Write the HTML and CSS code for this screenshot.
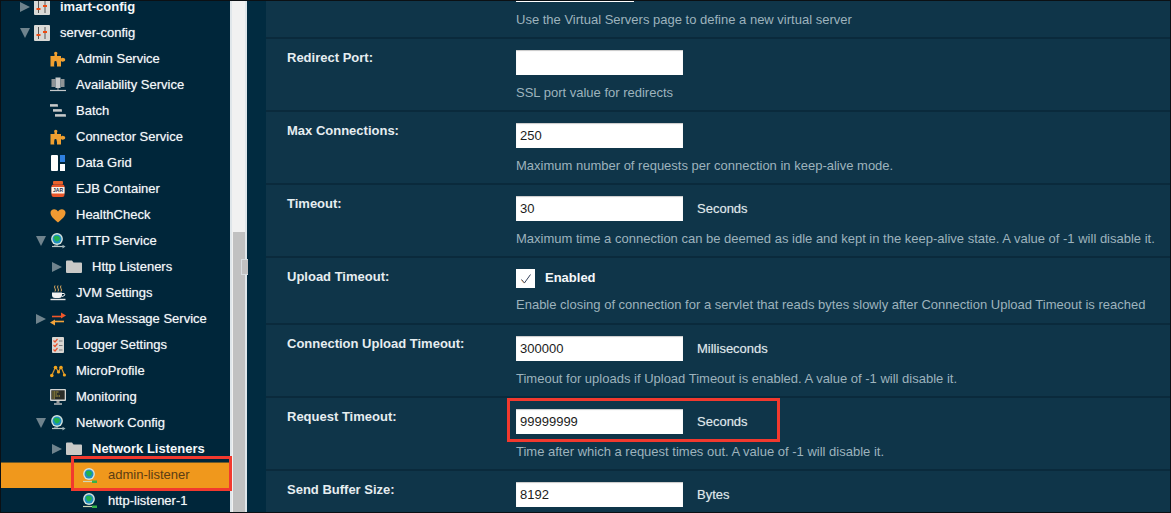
FILE: index.html
```html
<!DOCTYPE html>
<html lang="en">
<head>
<meta charset="utf-8">
<title>server-config</title>
<link rel="stylesheet" href="styles.css">
</head>
<body>
<svg class="defs" width="0" height="0" aria-hidden="true">
  <defs>
    <symbol id="tri-r" viewBox="0 0 10 10"><path d="M0 0L10 5L0 10Z" fill="#6f838d"/></symbol>
    <symbol id="tri-d" viewBox="0 0 10 10"><path d="M0 0H10L5 10Z" fill="#6f838d"/></symbol>
    <symbol id="config" viewBox="0 0 16 16">
      <rect width="16" height="16" rx="1" fill="#d9d9d6"/>
      <path d="M4.5 2V14M11 2V14" stroke="#555" stroke-width="1"/>
      <path d="M2.5 9H6.5V11H2.5ZM9 6H13V8H9Z" fill="#ee4b12"/>
    </symbol>
    <symbol id="puzzle" viewBox="0 0 16 16">
      <path d="M0.5 5H4.5V3.5A2 2 0 0 1 4.3 1.5A1.7 1.7 0 0 1 7.2 1.5A2 2 0 0 1 7 3.5V5H11V7.5A2 2 0 0 1 13.5 7A1.6 1.6 0 0 1 13.5 10.5A2 2 0 0 1 11 10V15.5H7V12.5H4.5V15.5H0.5Z" fill="#f0a030"/>
      <path d="M4.3 15.5V11.2A1 1 0 0 1 6.7 11.2V15.5Z" fill="#00263a"/>
    </symbol>
    <symbol id="server" viewBox="0 0 16 16">
      <rect x="1.5" y="2" width="4" height="8" fill="#8f9496"/>
      <rect x="5.5" y="0.5" width="5" height="10.5" fill="#c8cbcc"/>
      <rect x="10.5" y="2" width="4" height="8" fill="#8f9496"/>
      <path d="M8 11V13" stroke="#aaa"/>
      <path d="M0 13.5H16" stroke="#c4c8ca" stroke-width="1.2"/>
    </symbol>
    <symbol id="batch" viewBox="0 0 16 16">
      <path d="M0 2.5H8M3 7.5H12M5 12.5H16" stroke="#b3b7b8" stroke-width="2.6"/>
      <path d="M0 2H7M3 7H11M5 12H15" stroke="#e6e6e6" stroke-width="0.8"/>
    </symbol>
    <symbol id="grid" viewBox="0 0 16 16">
      <rect x="1" y="0" width="7" height="16" rx="1" fill="#fff"/>
      <rect x="10" y="0" width="5" height="7" fill="#2f80e0"/>
      <rect x="10" y="9" width="5" height="7" fill="#fff"/>
    </symbol>
    <symbol id="jar" viewBox="0 0 16 16">
      <rect x="3" y="0" width="10" height="3.4" rx="1" fill="#e8632c"/>
      <rect x="1.5" y="3.4" width="13" height="12.6" rx="2.2" fill="#e8562a"/>
      <rect x="1.5" y="6" width="13" height="6.5" fill="#fbf4ea"/>
      <text x="8" y="11.4" class="jar-label">JAR</text>
    </symbol>
    <symbol id="heart" viewBox="0 0 16 16">
      <path d="M8 15.5C4 12 0.5 9.5 0.5 5.5C0.5 2.2 5.5 0.6 8 4.4C10.5 0.6 15.5 2.2 15.5 5.5C15.5 9.5 12 12 8 15.5Z" fill="#f09a32"/>
    </symbol>
    <symbol id="globe" viewBox="0 0 16 16">
      <circle cx="7" cy="6" r="5.9" fill="#d7e4df"/>
      <circle cx="7" cy="6" r="4.5" fill="#1f8fc0"/>
      <path d="M4 3.5C6 2 9 2.5 10 5C9.5 8 7 9 5.5 8C5 6.5 3.5 5.5 4 3.5Z" fill="#22b14c"/>
      <path d="M2 13.5H13" stroke="#bcc8c8" stroke-width="1.2"/>
      <path d="M5 12V14M7 12V13" stroke="#bcc8c8"/>
      <path d="M12.5 11.8L15.5 13.6L12.5 15.4Z" fill="#9fb3b8"/>
    </symbol>
    <symbol id="globe-g" viewBox="0 0 16 16">
      <circle cx="7" cy="6" r="5.9" fill="#d7e4df"/>
      <circle cx="7" cy="6" r="4.5" fill="#1f8fc0"/>
      <path d="M4 3.5C6 2 9 2.5 10 5C9.5 8 7 9 5.5 8C5 6.5 3.5 5.5 4 3.5Z" fill="#22b14c"/>
      <path d="M1 13.5H10" stroke="#cfd8b8" stroke-width="1.2"/>
      <path d="M10 12.5H15V15H10Z" fill="#35b24a"/>
    </symbol>
    <symbol id="folder" viewBox="0 0 16 16">
      <path d="M0 2.5Q0 1.5 1 1.5H6L7.5 3.5H15Q16 3.5 16 4.5V13Q16 14 15 14H1Q0 14 0 13Z" fill="#c9c9c7"/>
    </symbol>
    <symbol id="cup" viewBox="0 0 16 16">
      <path d="M5 0.5Q4 2 5 3.5T5 6.5M8 0.5Q7 2 8 3.5T8 6.5M11 0.5Q10 2 11 3.5T11 6.5" stroke="#d9a860" fill="none" stroke-width="1"/>
      <path d="M2 7.5H12V10Q12 13 9 13H5Q2 13 2 10Z" fill="#f2f2f2"/>
      <path d="M12 8.5H14Q15.5 9 14.5 10.5L12 11.5" stroke="#f2f2f2" fill="none"/>
      <path d="M0.5 14.5H15.5" stroke="#e8e8e8" stroke-width="1.4"/>
    </symbol>
    <symbol id="jms" viewBox="0 0 16 16">
      <path d="M2 5.5H11" stroke="#f0572a" stroke-width="1.6" fill="none"/>
      <path d="M11 1.5L16 4.5L11 7.5Z" fill="#f0572a"/>
      <path d="M14 10.5H5" stroke="#f2a33a" stroke-width="1.6" fill="none"/>
      <path d="M5 8.5L0 11.5L5 14.5Z" fill="#f2a33a"/>
    </symbol>
    <symbol id="logger" viewBox="0 0 16 16">
      <rect x="2" y="0" width="12" height="16" rx="1" fill="#d8d6d2"/>
      <path d="M3.5 3.5L5 5L7.5 2M3.5 8L5 9.5L7.5 6.5M3.5 12.5L5 14L7.5 11" stroke="#e8502a" fill="none" stroke-width="1.2"/>
      <path d="M9 4H12.5M9 8.5H12.5M9 13H12.5" stroke="#77797a" stroke-width="1.2"/>
    </symbol>
    <symbol id="micro" viewBox="0 0 16 16">
      <path d="M1.5 13L5.5 4L8.5 9L11 4L14.5 12" stroke="#d8942c" fill="none" stroke-width="1.2"/>
      <circle cx="1.8" cy="12.5" r="1.8" fill="#f2a51e"/>
      <circle cx="5.5" cy="4.5" r="1.8" fill="#f2a51e"/>
      <circle cx="8.5" cy="9" r="1.6" fill="#f2a51e"/>
      <circle cx="11" cy="4.5" r="1.8" fill="#f2a51e"/>
      <circle cx="14.4" cy="12" r="1.6" fill="#f2a51e"/>
    </symbol>
    <symbol id="monitor" viewBox="0 0 16 16">
      <rect x="0" y="0" width="16" height="12" rx="1" fill="#d3d4d2"/>
      <rect x="1.3" y="1.3" width="13.4" height="9.2" fill="#2b2d28"/>
      <path d="M2.5 3H9M2.5 5H7M2.5 7H10M2.5 9H5" stroke="#d6c04a" stroke-dasharray="1 .6"/>
      <path d="M6.5 12H9.5V14H6.5Z" fill="#9a9c9c"/>
      <path d="M4 15H12" stroke="#c8c9c9" stroke-width="1.4"/>
    </symbol>
    <symbol id="tick" viewBox="0 0 12 12">
      <path d="M1.5 6.5L4.4 10L10.5 1.5" fill="none" stroke="#34405a" stroke-width="1"/>
      <path d="M1.2 7L4 10.4" fill="none" stroke="#e8923a" stroke-width=".5"/>
    </symbol>
  </defs>
</svg>

<div class="frame">
  <nav class="tree">
    <div class="node lvl0"><svg class="arrow"><use href="#tri-r"/></svg><svg class="ico"><use href="#config"/></svg><span class="strong">imart-config</span></div>
    <div class="node lvl0"><svg class="arrow"><use href="#tri-d"/></svg><svg class="ico"><use href="#config"/></svg><span>server-config</span></div>
    <div class="node lvl1"><i class="arrow"></i><svg class="ico"><use href="#puzzle"/></svg><span>Admin Service</span></div>
    <div class="node lvl1"><i class="arrow"></i><svg class="ico"><use href="#server"/></svg><span>Availability Service</span></div>
    <div class="node lvl1"><i class="arrow"></i><svg class="ico"><use href="#batch"/></svg><span>Batch</span></div>
    <div class="node lvl1"><i class="arrow"></i><svg class="ico"><use href="#puzzle"/></svg><span>Connector Service</span></div>
    <div class="node lvl1"><i class="arrow"></i><svg class="ico"><use href="#grid"/></svg><span>Data Grid</span></div>
    <div class="node lvl1"><i class="arrow"></i><svg class="ico"><use href="#jar"/></svg><span>EJB Container</span></div>
    <div class="node lvl1"><i class="arrow"></i><svg class="ico"><use href="#heart"/></svg><span>HealthCheck</span></div>
    <div class="node lvl1"><svg class="arrow"><use href="#tri-d"/></svg><svg class="ico"><use href="#globe"/></svg><span>HTTP Service</span></div>
    <div class="node lvl2"><svg class="arrow"><use href="#tri-r"/></svg><svg class="ico"><use href="#folder"/></svg><span>Http Listeners</span></div>
    <div class="node lvl1"><i class="arrow"></i><svg class="ico"><use href="#cup"/></svg><span>JVM Settings</span></div>
    <div class="node lvl1"><svg class="arrow"><use href="#tri-r"/></svg><svg class="ico"><use href="#jms"/></svg><span>Java Message Service</span></div>
    <div class="node lvl1"><i class="arrow"></i><svg class="ico"><use href="#logger"/></svg><span>Logger Settings</span></div>
    <div class="node lvl1"><i class="arrow"></i><svg class="ico"><use href="#micro"/></svg><span>MicroProfile</span></div>
    <div class="node lvl1"><i class="arrow"></i><svg class="ico"><use href="#monitor"/></svg><span>Monitoring</span></div>
    <div class="node lvl1"><svg class="arrow"><use href="#tri-d"/></svg><svg class="ico"><use href="#globe"/></svg><span>Network Config</span></div>
    <div class="node lvl2"><svg class="arrow"><use href="#tri-r"/></svg><svg class="ico"><use href="#folder"/></svg><span class="strong">Network Listeners</span></div>
    <div class="node lvl3 selected"><i class="arrow"></i><svg class="ico"><use href="#globe-g"/></svg><span>admin-listener</span><div class="callout tree-callout"></div></div>
    <div class="node lvl3"><i class="arrow"></i><svg class="ico"><use href="#globe-g"/></svg><span>http-listener-1</span></div>
  </nav>

  <div class="scrollbar"><div class="thumb"></div><div class="grip"></div></div>

  <main class="main">
    <div class="rows">
      <section class="row">
        <div class="label"></div>
        <div class="value">
          <div class="control"><input class="field field-short" type="text"></div>
          <p class="help">Use the Virtual Servers page to define a new virtual server</p>
        </div>
      </section>
      <section class="row">
        <div class="label">Redirect Port:</div>
        <div class="value">
          <div class="control"><input class="field" type="text"></div>
          <p class="help">SSL port value for redirects</p>
        </div>
      </section>
      <section class="row">
        <div class="label">Max Connections:</div>
        <div class="value">
          <div class="control"><input class="field" type="text" value="250"></div>
          <p class="help">Maximum number of requests per connection in keep-alive mode.</p>
        </div>
      </section>
      <section class="row">
        <div class="label">Timeout:</div>
        <div class="value">
          <div class="control"><input class="field" type="text" value="30"><span class="unit">Seconds</span></div>
          <p class="help">Maximum time a connection can be deemed as idle and kept in the keep-alive state. A value of -1 will disable it.</p>
        </div>
      </section>
      <section class="row row-check">
        <div class="label">Upload Timeout:</div>
        <div class="value">
          <div class="control control-check"><span class="check"><svg class="tick"><use href="#tick"/></svg></span><span class="check-text">Enabled</span></div>
          <p class="help">Enable closing of connection for a servlet that reads bytes slowly after Connection Upload Timeout is reached</p>
        </div>
      </section>
      <section class="row">
        <div class="label">Connection Upload Timeout:</div>
        <div class="value">
          <div class="control"><input class="field" type="text" value="300000"><span class="unit">Milliseconds</span></div>
          <p class="help">Timeout for uploads if Upload Timeout is enabled. A value of -1 will disable it.</p>
        </div>
      </section>
      <section class="row">
        <div class="label">Request Timeout:</div>
        <div class="value">
          <div class="control"><input class="field" type="text" value="99999999"><span class="unit">Seconds</span><div class="callout field-callout"></div></div>
          <p class="help">Time after which a request times out. A value of -1 will disable it.</p>
        </div>
      </section>
      <section class="row">
        <div class="label">Send Buffer Size:</div>
        <div class="value">
          <div class="control"><input class="field" type="text" value="8192"><span class="unit">Bytes</span></div>
        </div>
      </section>
    </div>
  </main>
</div>
</body>
</html>
```
FILE: styles.css
```css
* { box-sizing: border-box; }
html, body { margin: 0; padding: 0; height: 100%; overflow: hidden; background: #012b40; }
.defs { position: absolute; }
.frame {
  display: flex;
  width: 1171px;
  height: 513px;
  border: 1px solid #0b1014;
  overflow: hidden;
  font-family: "Liberation Sans", Arial, sans-serif;
  font-size: 13px;
}
.tree {
  flex: 0 0 229px;
  margin-top: -7px;
  background: #00263a;
  color: #f4f8fa;
  text-shadow: 0 0 1px rgba(255, 255, 255, .55);
}
.node {
  position: relative;
  display: flex;
  align-items: center;
  height: 26px;
  white-space: nowrap;
}
.node span { margin-top: -2px; }
.lvl0 { padding-left: 19px; }
.lvl1 { padding-left: 35px; }
.lvl2 { padding-left: 51px; }
.lvl3 { padding-left: 67px; }
.arrow { flex: 0 0 10px; width: 10px; height: 10px; margin-right: 4px; display: block; }
.ico { flex: 0 0 16px; width: 16px; height: 16px; margin-right: 10px; display: block; }
.strong { font-weight: bold; text-shadow: none; }
.selected {
  background: #f0981c;
  color: #5b3d14;
  text-shadow: none;
  border-top: 1px solid #6e5a2a;
}
.jar-label { font: bold 5px "Liberation Sans", sans-serif; fill: #1e2a44; text-anchor: middle; }
.callout { position: absolute; border: 3px solid #f2392e; pointer-events: none; }
.tree-callout { left: 70px; top: -7px; width: 161px; height: 35px; z-index: 3; }
.field-callout { left: -9px; top: -11px; width: 273px; height: 44px; }

.scrollbar {
  position: relative;
  flex: 0 0 17px;
  background: #f1f1f1;
  border-left: 2px solid #dfe6ea;
  border-right: 2px solid #dfe6ea;
}
.thumb { margin: 231px 0 0 1px; height: 300px; width: 12px; background: #c1c1c1; }
.grip {
  position: absolute;
  left: 9px;
  top: 258px;
  width: 7px;
  height: 16px;
  border: 1px solid #d8dde0;
  border-right-width: 0;
  background: #c1c1c1;
}

.main { flex: 1; min-width: 0; background: #012b40; padding-left: 19px; }
.rows { margin-top: -35px; background: #0f3549; }
.row {
  display: flex;
  height: 73px;
  border-bottom: 2px solid #0a2a3c;
}
.row-check { height: 67px; }
.label {
  flex: 0 0 250px;
  padding: 11px 0 0 21px;
  font-weight: bold;
  line-height: 15px;
  color: #e6edf0;
}
.value { flex: 1; padding-top: 11px; }
.control { position: relative; display: flex; align-items: center; height: 25px; }
.control-check { height: 19px; }
.field {
  width: 167px;
  height: 25px;
  padding: 0 4px;
  border: 0;
  border-radius: 0;
  background: #fff;
  font: 13px "Liberation Sans", Arial, sans-serif;
  color: #1c1c1c;
  box-shadow: inset 0 1px 1px #c8c8c8;
}
.field-short { width: 118px; }
.unit { margin-left: 14px; color: #dfe7ea; text-shadow: 0 0 1px rgba(255, 255, 255, .4); }
.check {
  display: flex;
  align-items: center;
  justify-content: center;
  width: 19px;
  height: 19px;
  background: #fff;
}
.tick { width: 12px; height: 12px; display: block; }
.check-text { margin: -2px 0 0 10px; font-weight: bold; color: #f4f8fa; }
.help { margin: 10px 0 0; line-height: 15px; color: #9db3bd; white-space: nowrap; }
.row-check .help { margin-top: 9px; }
```
